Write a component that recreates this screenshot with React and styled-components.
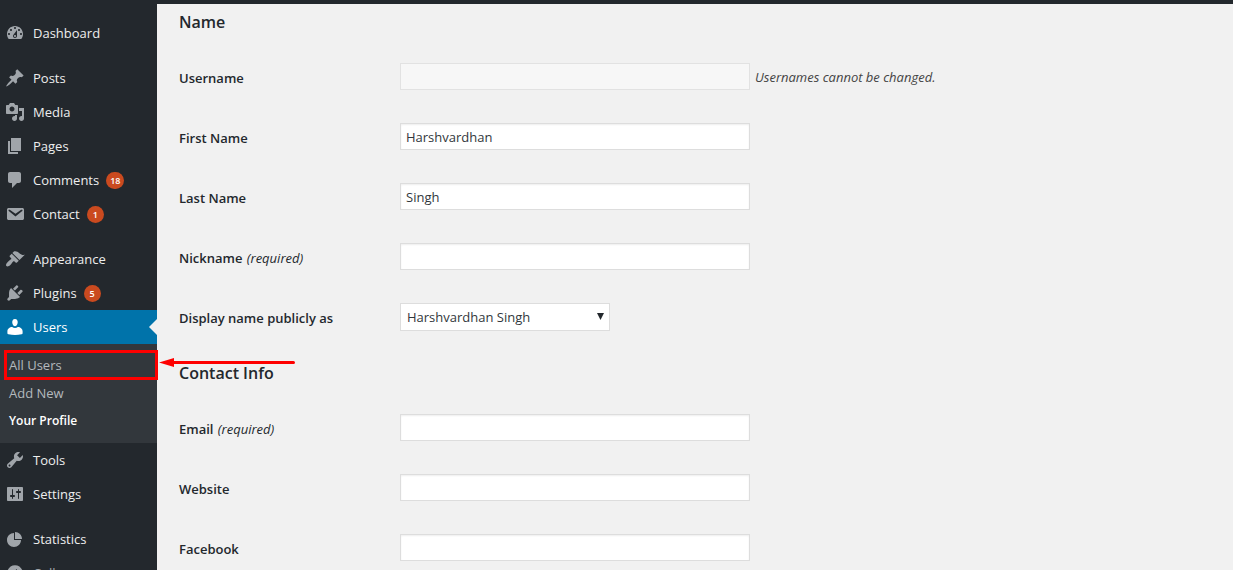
import styled, { createGlobalStyle, css } from 'styled-components';

const GlobalStyle = createGlobalStyle`
  *,
  *::before,
  *::after {
    box-sizing: border-box;
  }

  body {
    margin: 0;
    background: #f1f1f1;
    color: #32373c;
    font-family: 'Open Sans', 'Noto Sans', sans-serif;
    font-size: 13px;
    line-height: 18px;
  }
`;

const Page = styled.div`
  display: grid;
  grid-template-columns: 157px 1fr;
  height: 100vh;
  overflow: hidden;
`;

const Sidebar = styled.nav`
  position: relative;
  z-index: 1;
  padding-top: 16px;
  background: #23282d;
`;

const Menu = styled.ul`
  margin: 0;
  padding: 0;
  list-style: none;
`;

const MenuItem = styled.li`
  margin-top: ${({ $spaced }) => ($spaced ? '11px' : '0')};
`;

const menuRow = css`
  display: flex;
  align-items: center;
  width: 100%;
  height: 34px;
  padding: 0 0 0 5px;
  font: inherit;
  text-decoration: none;
`;

const MenuLink = styled.a`
  ${menuRow}
  position: relative;
  background: ${({ $active }) => ($active ? '#0073aa' : 'transparent')};
  color: ${({ $active }) => ($active ? '#fff' : '#eee')};

  svg {
    fill: ${({ $active }) => ($active ? '#fff' : '#a0a5aa')};
  }
`;

const CollapseButton = styled.button`
  ${menuRow}
  border: 0;
  background: none;
  color: #a0a5aa;

  svg {
    fill: #a0a5aa;
  }
`;

const MenuIcon = styled.svg`
  flex: none;
  width: 20px;
  height: 20px;
  margin-right: 8px;
`;

const ActiveNotch = styled.span`
  position: absolute;
  top: 9px;
  right: 0;
  border: 8px solid transparent;
  border-left-width: 0;
  border-right-color: #f1f1f1;
`;

const Badge = styled.span`
  min-width: 17px;
  height: 17px;
  margin-left: 7px;
  padding: 0 4px;
  border-radius: 9px;
  background: #ca4a1f;
  color: #fff;
  font-size: 9px;
  font-weight: 600;
  line-height: 17px;
  text-align: center;
`;

const Submenu = styled.ul`
  margin: 0;
  padding: 7px 0 8px;
  background: #32373c;
  list-style: none;
`;

const SubmenuItem = styled.li`
  position: relative;
`;

const SubmenuLink = styled.a`
  display: block;
  padding: 5px 9px;
  color: ${({ $current }) => ($current ? '#fff' : '#b4b9be')};
  font-size: ${({ $current }) => ($current ? '12px' : '13px')};
  font-weight: ${({ $current }) => ($current ? 600 : 400)};
  text-decoration: none;
`;

const Highlight = styled.span`
  position: absolute;
  inset: -1px -1px -1px 4px;
  border: 3px solid #fe0000;
  pointer-events: none;
`;

const Arrow = styled.svg`
  position: absolute;
  top: 6px;
  left: calc(100% + 2px);
  width: 136px;
  height: 11px;
  fill: #fe0000;
  pointer-events: none;
`;

const Main = styled.main`
  min-width: 0;
  padding: 6px 22px 0;
  border-top: 4px solid #23282d;
`;

const SectionTitle = styled.h2`
  margin: 0 0 13px;
  color: #23282d;
  font-size: 16px;
  font-weight: 600;
  line-height: 24px;

  section + section > & {
    margin-top: 13px;
  }
`;

const FormRow = styled.div`
  display: grid;
  grid-template-columns: 221px 1fr;
  padding: 16px 0 17px;
`;

const Label = styled.label`
  padding-top: 6px;
  color: #23282d;
  font-weight: 600;
`;

const Required = styled.em`
  margin-left: 1px;
  font-weight: 400;
`;

const Field = styled.div`
  display: flex;
  align-items: center;
  gap: 5px;
`;

const TextInput = styled.input`
  width: 350px;
  max-width: 100%;
  height: 27px;
  padding: 0 5px;
  border: 1px solid #ddd;
  border-radius: 0;
  background: #fff;
  box-shadow: inset 0 1px 2px rgba(0, 0, 0, 0.07);
  color: #32373c;
  font: inherit;

  &:disabled {
    border-color: #e2e2e2;
    background: #f7f7f7;
    box-shadow: none;
  }
`;

const Description = styled.span`
  color: #444;
  font-style: italic;
`;

const SelectWrap = styled.div`
  position: relative;
`;

const Select = styled.select`
  display: block;
  width: 210px;
  height: 28px;
  padding: 0 20px 0 6px;
  border: 1px solid #ddd;
  border-radius: 0;
  background: #fff;
  color: #32373c;
  font: inherit;
  appearance: none;
`;

const SelectArrow = styled.svg`
  position: absolute;
  top: 10px;
  right: 6px;
  width: 7px;
  height: 7px;
  fill: #23282d;
  pointer-events: none;
`;

const icons = {
  dashboard:
    'M3.76 16h12.48c1.1-1.37 1.76-3.11 1.76-5 0-4.42-3.58-8-8-8s-8 3.58-8 8c0 1.89.66 3.63 1.76 5zM10 4c.55 0 1 .45 1 1s-.45 1-1 1-1-.45-1-1 .45-1 1-1zM6 6c.55 0 1 .45 1 1s-.45 1-1 1-1-.45-1-1 .45-1 1-1zm8 0c.55 0 1 .45 1 1s-.45 1-1 1-1-.45-1-1 .45-1 1-1zm-5.37 5.55L12 7v6c0 1.1-.9 2-2 2s-2-.9-2-2c0-.57.24-1.08.63-1.45zM4 10c.55 0 1 .45 1 1s-.45 1-1 1-1-.45-1-1 .45-1 1-1zm12 0c.55 0 1 .45 1 1s-.45 1-1 1-1-.45-1-1 .45-1 1-1zm-5 3c0-.55-.45-1-1-1s-1 .45-1 1 .45 1 1 1 1-.45 1-1z',
  post: 'M10.44 3.02l1.82-1.82 6.36 6.35-1.83 1.82c-1.05-.68-2.48-.57-3.41.36l-.75.75c-.92.93-1.04 2.35-.35 3.41l-1.83 1.82-2.41-2.41-2.8 2.79c-.42.42-3.38 2.71-3.8 2.29s1.86-3.39 2.28-3.81l2.79-2.79L4.1 9.36l1.83-1.82c1.05.69 2.48.57 3.4-.36l.75-.75c.93-.92 1.05-2.35.36-3.41z',
  media:
    'M13 11V4c0-.55-.45-1-1-1h-1.67L9 1H5L3.67 3H2c-.55 0-1 .45-1 1v7c0 .55.45 1 1 1h10c.55 0 1-.45 1-1zM7 4.5c1.38 0 2.5 1.12 2.5 2.5S8.38 9.5 7 9.5 4.5 8.38 4.5 7 5.62 4.5 7 4.5zM14 6h5v10.5c0 1.38-1.12 2.5-2.5 2.5S14 17.88 14 16.5s1.12-2.5 2.5-2.5c.17 0 .34.02.5.05V9h-3V6zm-4 8.05V13h2v3.5c0 1.38-1.12 2.5-2.5 2.5S7 17.88 7 16.5 8.12 14 9.5 14c.17 0 .34.02.5.05z',
  page: 'M6 15V2h10v13H6zm-1 1h8v2H3V5h2v11z',
  comments:
    'M5 2h9c1.1 0 2 .9 2 2v7c0 1.1-.9 2-2 2h-2l-5 5v-5H5c-1.1 0-2-.9-2-2V4c0-1.1.9-2 2-2z',
  email:
    'M3.87 4h13.25C18.37 4 19 4.59 19 5.79v8.42c0 1.19-.63 1.79-1.88 1.79H3.87c-1.25 0-1.88-.6-1.88-1.79V5.79c0-1.2.63-1.79 1.88-1.79zm6.62 8.6l6.74-5.53c.24-.2.43-.66.13-1.07-.29-.41-.82-.42-1.17-.17l-5.7 3.86L4.8 5.83c-.35-.25-.88-.24-1.17.17-.3.41-.11.87.13 1.07z',
  appearance:
    'M14.48 11.06L7.41 3.99l1.5-1.5c.5-.56 2.3-.47 3.51.32 1.21.8 1.43 1.28 2.91 2.1 1.18.64 2.45 1.26 4.45.85zm-.71.71L6.7 4.7 4.93 6.47c-.39.39-.39 1.02 0 1.41l1.06 1.06c.39.39.39 1.03 0 1.42-.6.6-1.43 1.11-2.21 1.69-.35.26-.7.53-1.01.84C1.43 14.23.4 16.08 1.4 17.07c.99 1 2.84-.03 4.18-1.36.31-.31.58-.66.85-1.02.57-.78 1.08-1.61 1.69-2.21.39-.39 1.02-.39 1.41 0l1.06 1.06c.39.39 1.02.39 1.41 0z',
  plugins:
    'M13.11 4.36L9.87 7.6 8 5.73l3.24-3.24c.35-.34 1.05-.2 1.56.32.52.51.66 1.21.31 1.55zm-8 1.77l.91-1.12 9.01 9.01-1.19.84c-.71.71-2.63 1.16-3.82 1.16H6.14L4.9 17.26c-.59.59-1.54.59-2.12 0-.59-.58-.59-1.53 0-2.12l1.24-1.24v-3.88c0-1.13.4-3.19 1.09-3.89zm7.26 3.97l3.24-3.24c.34-.35 1.04-.21 1.55.31.52.51.66 1.21.31 1.55l-3.24 3.25z',
  users:
    'M10 9.25c-2.27 0-2.73-3.44-2.73-3.44C7 4.02 7.82 2 9.97 2c2.16 0 2.98 2.02 2.71 3.81 0 0-.41 3.44-2.68 3.44zM7.2 10c.8.7 1.700 1 2.800 1s2-.3 2.800-1c2.500 0 4.800 1.900 4.800 4.300v1.900c0 .6-.4 1-1 1.100-4.400.9-8.800.9-13.200 0-.6-.1-1-.5-1-1.100v-1.900c0-2.400 2.300-4.300 4.800-4.300z',
  tools:
    'M16.68 9.77c-1.34 1.34-3.3 1.67-4.95.99l-5.41 6.52c-.99.99-2.59.99-3.58 0s-.99-2.59 0-3.57l6.52-5.42c-.68-1.65-.35-3.61.99-4.95 1.28-1.28 3.12-1.62 4.72-1.06l-2.89 2.89 2.82 2.82 2.86-2.87c.53 1.58.18 3.39-1.08 4.65zM3.81 16.21c.4.39 1.04.39 1.43 0 .4-.4.4-1.04 0-1.43-.39-.4-1.03-.4-1.43 0-.39.39-.39 1.03 0 1.43z',
  settings:
    'M18 16V4c0-.55-.45-1-1-1H3c-.55 0-1 .45-1 1v12c0 .55.45 1 1 1h14c.55 0 1-.45 1-1zM8 11h1c.55 0 1 .45 1 1s-.45 1-1 1H8v1.5c0 .28-.22.5-.5.5s-.5-.22-.5-.5V13H6c-.55 0-1-.45-1-1s.45-1 1-1h1V5.5c0-.28.22-.5.5-.5s.5.22.5.5V11zm5-2h-1c-.55 0-1-.45-1-1s.45-1 1-1h1V5.5c0-.28.22-.5.5-.5s.5.22.5.5V7h1c.55 0 1 .45 1 1s-.45 1-1 1h-1v5.5c0 .28-.22.5-.5.5s-.5-.22-.5-.5V9z',
  chart: 'M10 10V3c3.87 0 7 3.13 7 7h-7zM9 4v7h7c0 3.87-3.13 7-7 7s-7-3.13-7-7 3.13-7 7-7z',
  collapse:
    'M10 2.16c4.33 0 7.84 3.51 7.84 7.84s-3.51 7.84-7.84 7.84S2.16 14.33 2.16 10 5.67 2.16 10 2.16zm2 11.72V6.12L6.18 9.97z',
};

const menuItems = [
  { label: 'Dashboard', icon: 'dashboard' },
  { label: 'Posts', icon: 'post', spaced: true },
  { label: 'Media', icon: 'media' },
  { label: 'Pages', icon: 'page' },
  { label: 'Comments', icon: 'comments', count: 18 },
  { label: 'Contact', icon: 'email', count: 1 },
  { label: 'Appearance', icon: 'appearance', spaced: true },
  { label: 'Plugins', icon: 'plugins', count: 5 },
  {
    label: 'Users',
    icon: 'users',
    active: true,
    children: [
      { label: 'All Users', highlighted: true },
      { label: 'Add New' },
      { label: 'Your Profile', current: true },
    ],
  },
  { label: 'Tools', icon: 'tools' },
  { label: 'Settings', icon: 'settings' },
  { label: 'Statistics', icon: 'chart', spaced: true },
];

const Icon = ({ name }) => (
  <MenuIcon viewBox="0 0 20 20" aria-hidden="true">
    <path d={icons[name]} fillRule="evenodd" />
  </MenuIcon>
);

const SidebarItem = ({ label, icon, count, spaced, active, children }) => (
  <MenuItem $spaced={spaced}>
    <MenuLink href="#" $active={active}>
      <Icon name={icon} />
      {label}
      {count && <Badge>{count}</Badge>}
      {active && <ActiveNotch />}
    </MenuLink>
    {children && (
      <Submenu>
        {children.map((child) => (
          <SubmenuItem key={child.label}>
            <SubmenuLink href="#" $current={child.current}>
              {child.label}
            </SubmenuLink>
            {child.highlighted && (
              <>
                <Highlight />
                <Arrow viewBox="0 0 136 11" aria-hidden="true">
                  <path d="M0 5.5L15 1v3h119.500a1.500 1.500 0 0 1 0 3H15v3z" />
                </Arrow>
              </>
            )}
          </SubmenuItem>
        ))}
      </Submenu>
    )}
  </MenuItem>
);

const TextRow = ({ id, label, required, hint, ...inputProps }) => (
  <FormRow>
    <Label htmlFor={id}>
      {label} {required && <Required>(required)</Required>}
    </Label>
    <Field>
      <TextInput id={id} type="text" {...inputProps} />
      {hint && <Description>{hint}</Description>}
    </Field>
  </FormRow>
);

const App = () => {
  return (
    <>
      <GlobalStyle />
      <Page>
        <Sidebar>
          <Menu>
            {menuItems.map((item) => (
              <SidebarItem key={item.label} {...item} />
            ))}
            <MenuItem>
              <CollapseButton type="button">
                <Icon name="collapse" />
                Collapse menu
              </CollapseButton>
            </MenuItem>
          </Menu>
        </Sidebar>
        <Main>
          <section>
            <SectionTitle>Name</SectionTitle>
            <TextRow
              id="user_login"
              label="Username"
              hint="Usernames cannot be changed."
              disabled
            />
            <TextRow id="first_name" label="First Name" defaultValue="Harshvardhan" />
            <TextRow id="last_name" label="Last Name" defaultValue="Singh" />
            <TextRow id="nickname" label="Nickname" required />
            <FormRow>
              <Label htmlFor="display_name">Display name publicly as</Label>
              <Field>
                <SelectWrap>
                  <Select id="display_name">
                    <option>Harshvardhan Singh</option>
                  </Select>
                  <SelectArrow viewBox="0 0 7 7" aria-hidden="true">
                    <path d="M0 0h7L3.500 7z" />
                  </SelectArrow>
                </SelectWrap>
              </Field>
            </FormRow>
          </section>
          <section>
            <SectionTitle>Contact Info</SectionTitle>
            <TextRow id="email" label="Email" required />
            <TextRow id="url" label="Website" />
            <TextRow id="facebook" label="Facebook" />
          </section>
        </Main>
      </Page>
    </>
  );
};

export default App;
